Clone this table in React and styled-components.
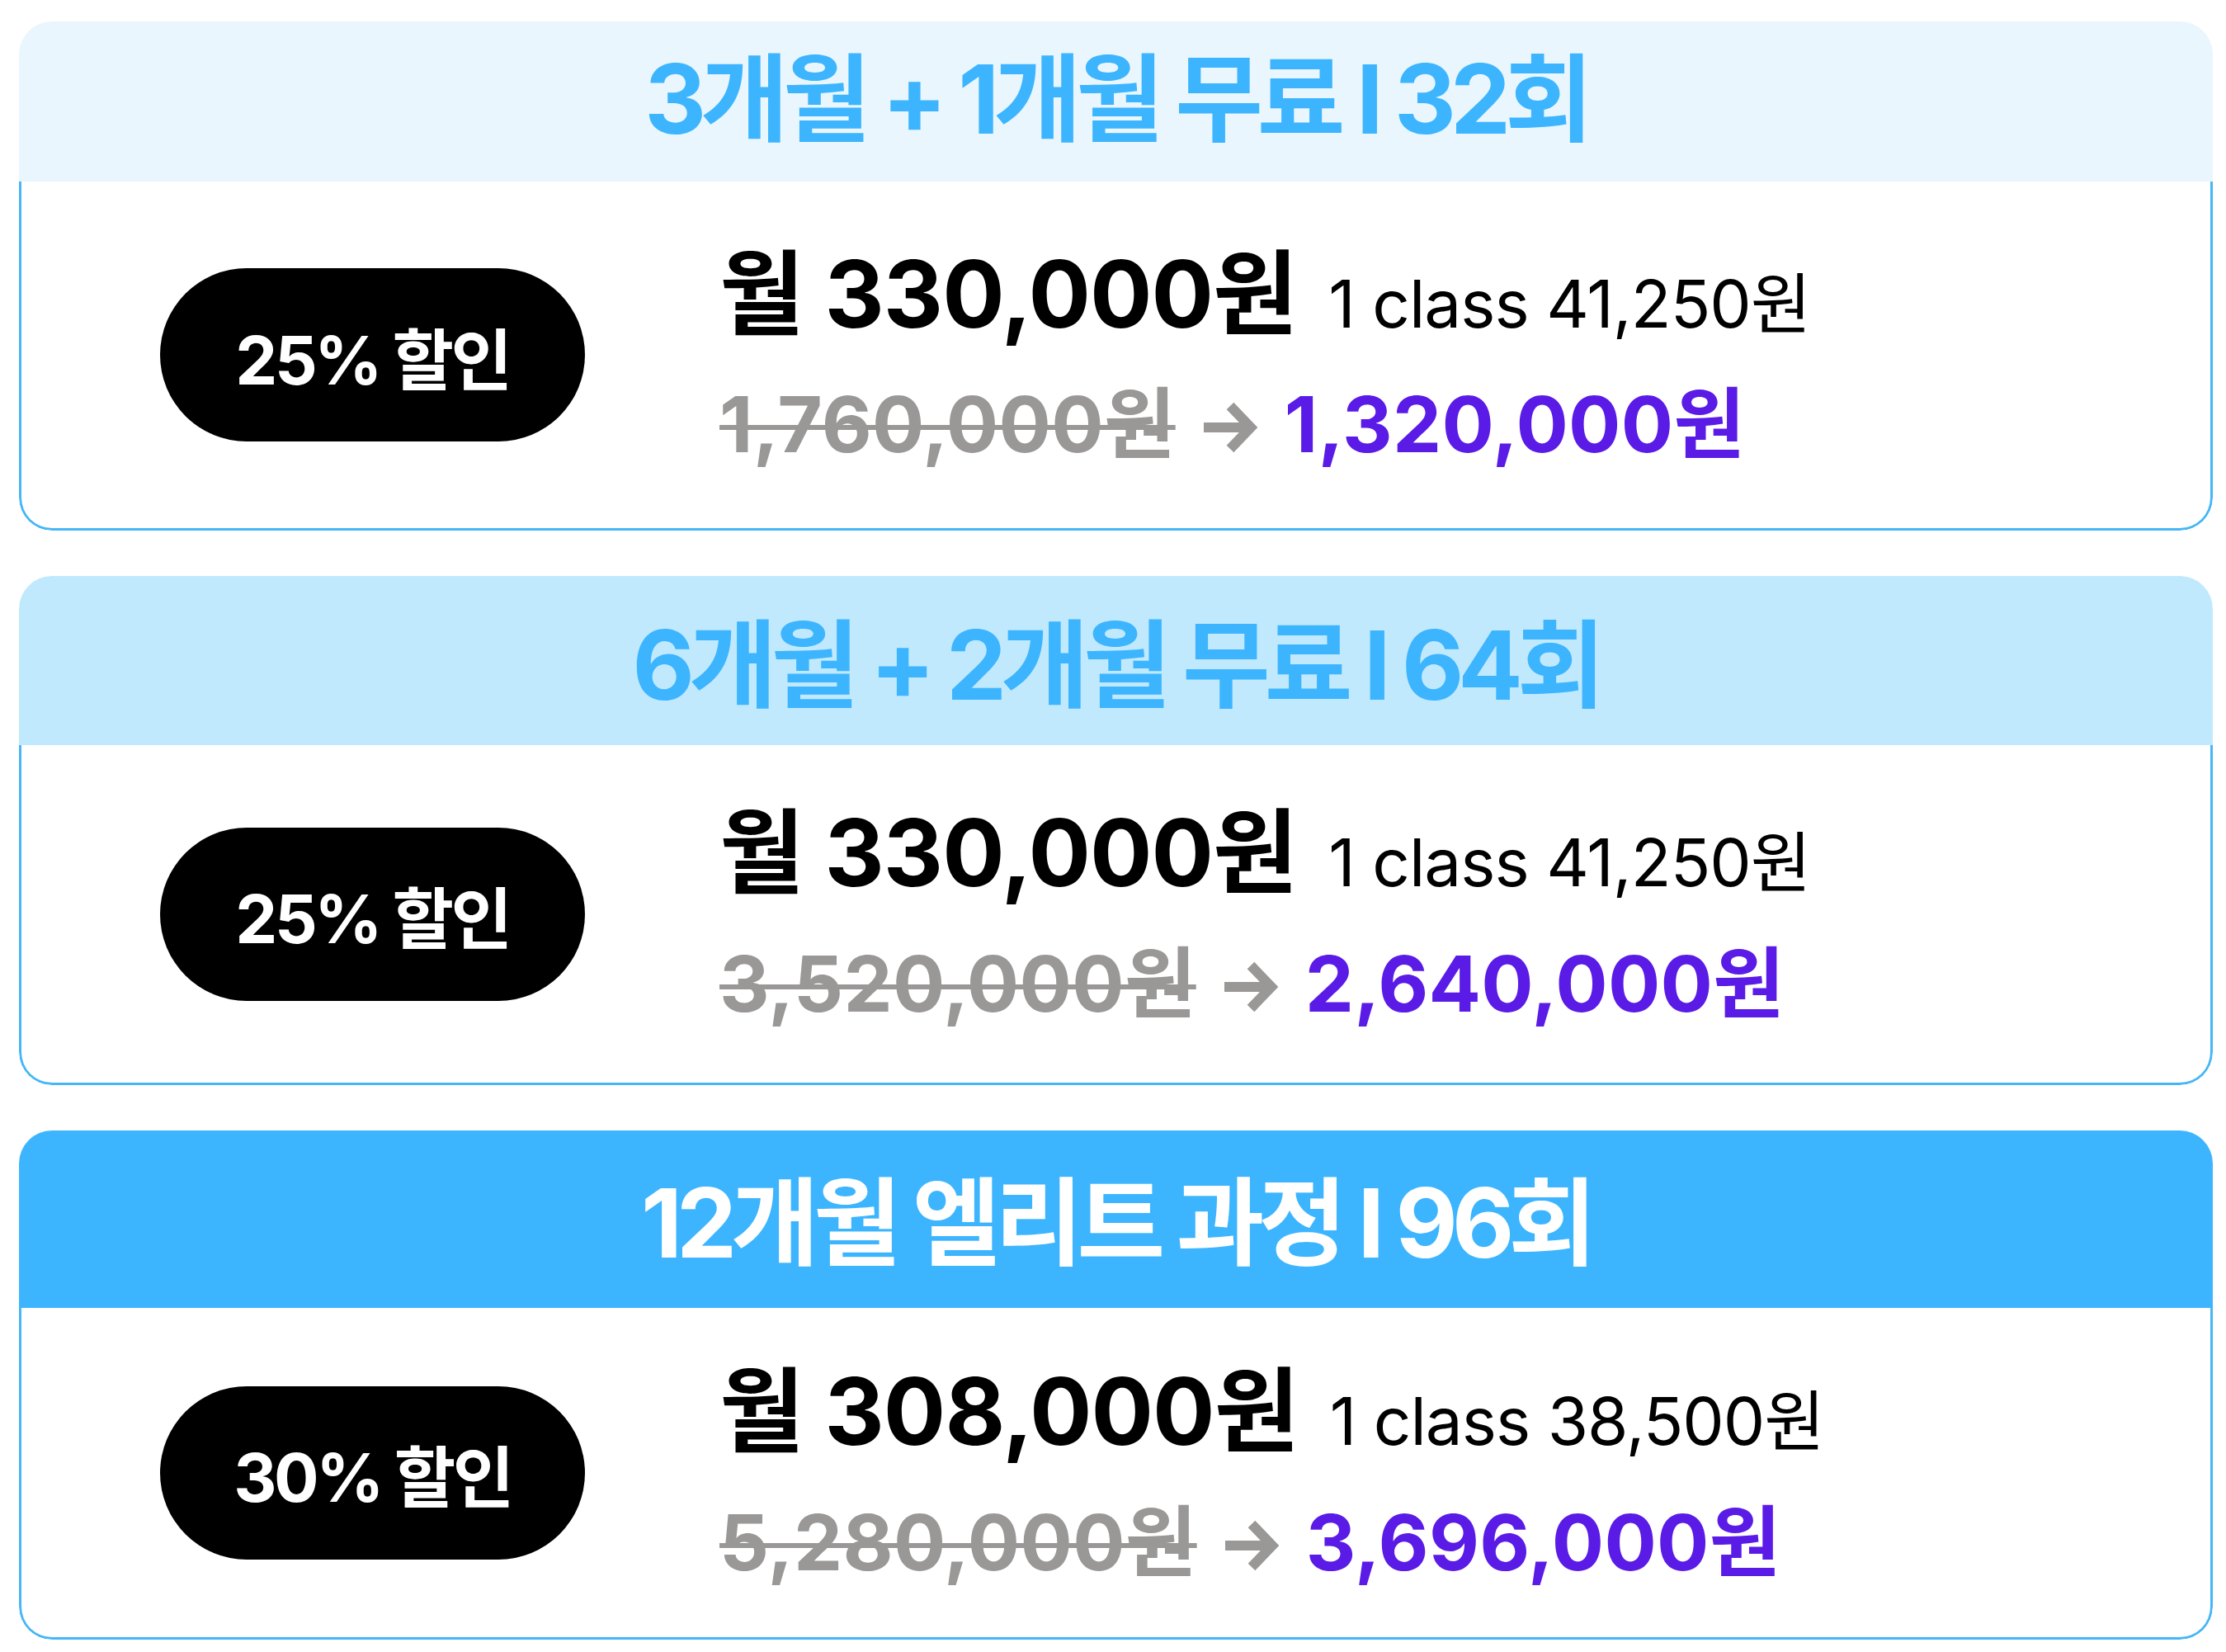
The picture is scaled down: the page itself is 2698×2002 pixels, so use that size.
import React from "react";
import styled, { createGlobalStyle } from "styled-components";

const GlobalStyle = createGlobalStyle`
  html, body { margin: 0; padding: 0; background: #ffffff; }
  body { font-family: "Inter", "Noto Sans CJK KR", sans-serif; }
`;

const Page = styled.div`
  display: flex;
  flex-direction: column;
  gap: 55px;
  padding: 26px 0 0 23px;
  width: 2659px;
`;

const Card = styled.section`
  display: flex;
  flex-direction: column;
  height: 617px;
  border-radius: 40px;
  overflow: hidden;
  background: #ffffff;
`;

const Header = styled.header`
  flex: 0 0 ${(p) => p.$h}px;
  box-sizing: border-box;
  padding-bottom: ${(p) => p.$lift}px;
  display: flex;
  align-items: center;
  justify-content: center;
  background: ${(p) => p.$bg};
  color: ${(p) => p.$fg};
  font-family: "Inter", "Noto Sans CJK KR", sans-serif;
  font-weight: 700;
  font-size: 116px;
  letter-spacing: -7px;
  white-space: pre;
`;

const Body = styled.div`
  flex: 1;
  display: flex;
  align-items: center;
  border: 3px solid #45b6f6;
  border-top: none;
  border-radius: 0 0 40px 40px;
`;

const Badge = styled.div`
  flex: 0 0 515px;
  height: 210px;
  margin-left: 168px;
  border-radius: 105px;
  background: #000000;
  color: #ffffff;
  display: flex;
  align-items: center;
  justify-content: center;
  font-weight: 700;
  font-size: 81px;
  letter-spacing: -3.5px;
`;

const Prices = styled.div`
  margin-left: 163px;
  display: flex;
  flex-direction: column;
  gap: 40px;
`;

const MainLine = styled.div`
  display: flex;
  align-items: baseline;
  gap: 38px;
  line-height: 1.15;
`;

const Monthly = styled.span`
  font-weight: 700;
  font-size: 112px;
  color: #000000;
  letter-spacing: -1px;
`;

const PerClass = styled.span`
  font-weight: 400;
  font-size: 80px;
  color: #000000;
  letter-spacing: -1px;
`;

const TotalLine = styled.div`
  display: flex;
  align-items: center;
  line-height: 1.15;
  font-weight: 700;
  font-size: 94px;
  letter-spacing: 0.3px;
`;

const Original = styled.span`
  color: #9a9797;
  text-decoration: line-through;
  text-decoration-thickness: 6px;
  text-decoration-color: #9a9797;
`;

const ArrowIcon = styled.svg`
  flex: 0 0 auto;
  width: 67px;
  height: 62px;
  margin: 8px 31px 0 34px;
`;

const Final = styled.span`
  color: #5b1be6;
`;

const Arrow = () => (
  <ArrowIcon viewBox="0 0 67 62" fill="none" stroke="#9a9797" strokeWidth="12">
    <path d="M0 31 H56" strokeLinecap="butt" />
    <path d="M32 5 L57 31 L32 57" strokeLinejoin="miter" strokeLinecap="butt" />
  </ArrowIcon>
);

const plans = [
  {
    title: "3개월 + 1개월 무료 I 32회",
    bg: "#e9f6fe",
    fg: "#3db5fe",
    h: 194,
    lift: 24,
    badge: "25% 할인",
    monthly: "월 330,000원",
    perClass: "1 class 41,250원",
    original: "1,760,000원",
    final: "1,320,000원",
  },
  {
    title: "6개월 + 2개월 무료 I 64회",
    bg: "#c1e9fe",
    fg: "#3db5fe",
    h: 205,
    lift: 8,
    badge: "25% 할인",
    monthly: "월 330,000원",
    perClass: "1 class 41,250원",
    original: "3,520,000원",
    final: "2,640,000원",
  },
  {
    title: "12개월 엘리트 과정 I 96회",
    bg: "#3db5fe",
    fg: "#ffffff",
    h: 215,
    lift: 10,
    badge: "30% 할인",
    monthly: "월 308,000원",
    perClass: "1 class 38,500원",
    original: "5,280,000원",
    final: "3,696,000원",
  },
];

export default function App() {
  return (
    <>
      <GlobalStyle />
      <Page>
        {plans.map((p) => (
          <Card key={p.title}>
            <Header $bg={p.bg} $fg={p.fg} $h={p.h} $lift={p.lift}>
              {p.title}
            </Header>
            <Body>
              <Badge>{p.badge}</Badge>
              <Prices>
                <MainLine>
                  <Monthly>{p.monthly}</Monthly>
                  <PerClass>{p.perClass}</PerClass>
                </MainLine>
                <TotalLine>
                  <Original>{p.original}</Original>
                  <Arrow />
                  <Final>{p.final}</Final>
                </TotalLine>
              </Prices>
            </Body>
          </Card>
        ))}
      </Page>
    </>
  );
}
